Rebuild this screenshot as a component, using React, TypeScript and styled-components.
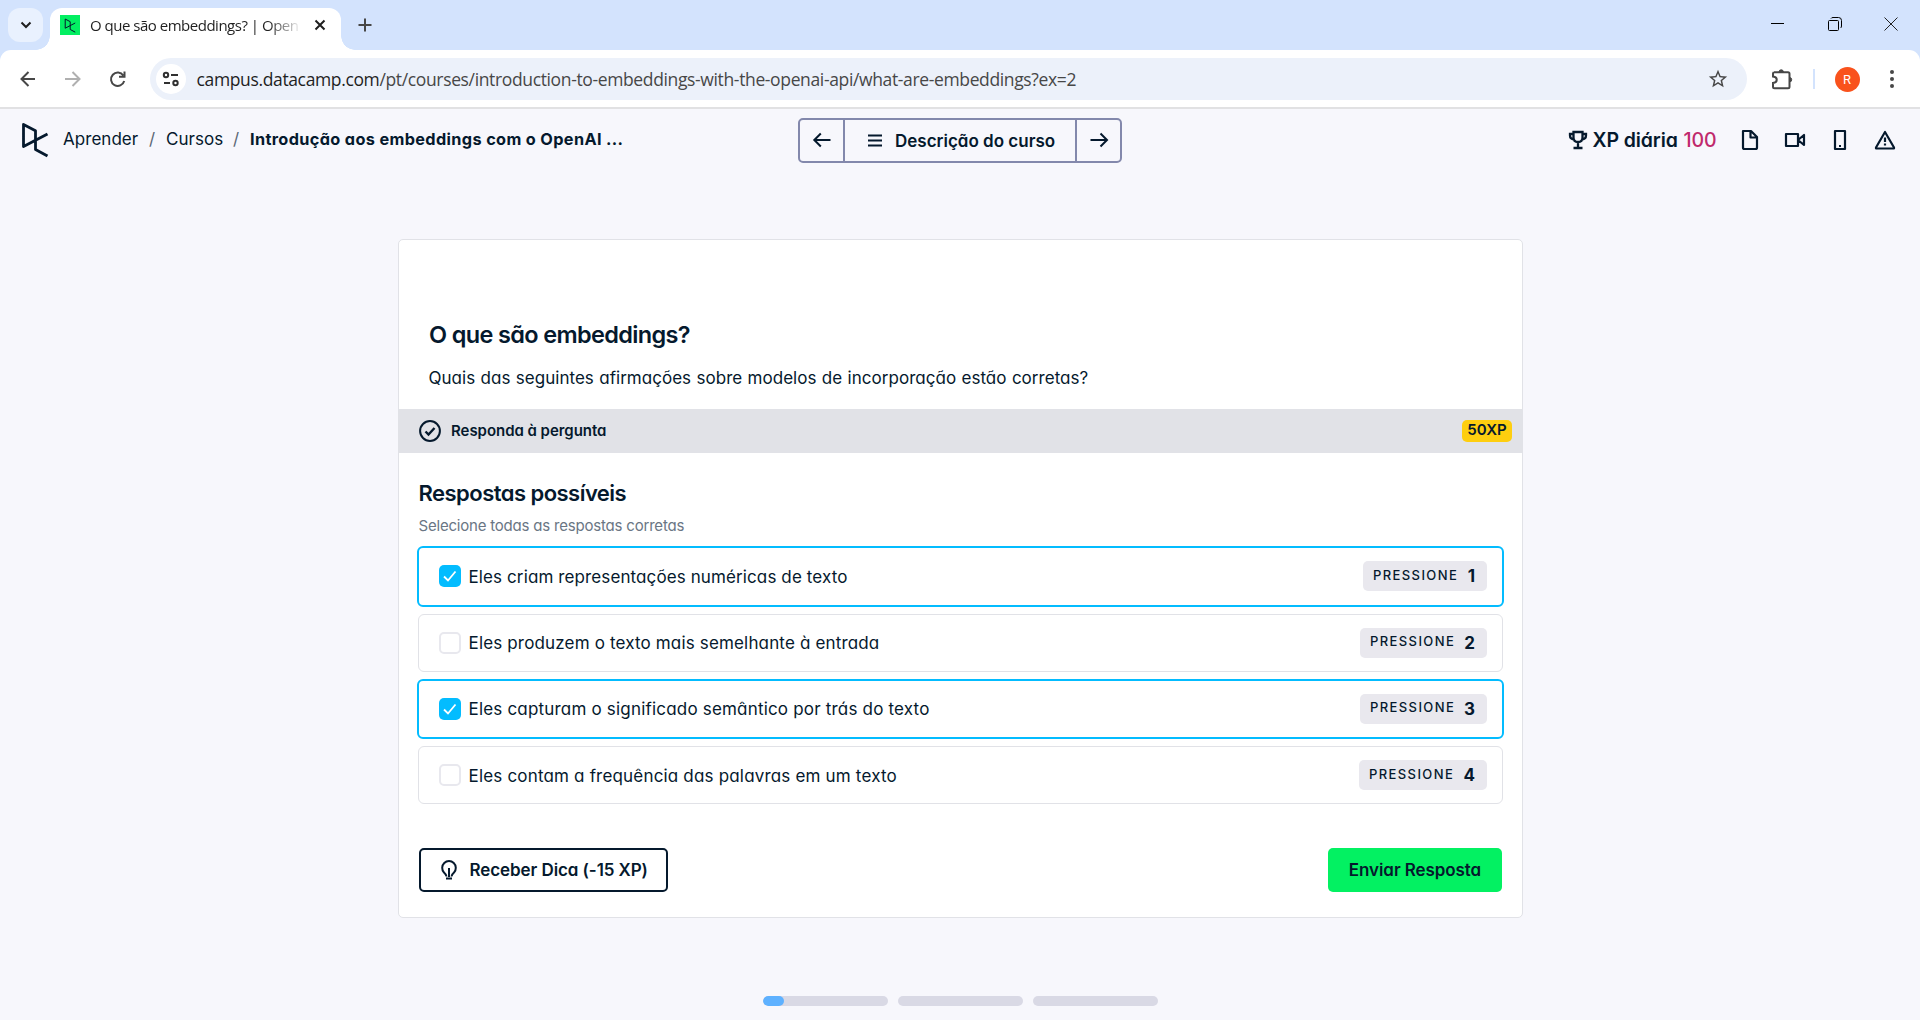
import React from 'react';
import styled, { createGlobalStyle } from 'styled-components';
import { MdStarOutline } from 'react-icons/md';

const navy = '#05192d';
const ui = `Inter, 'Liberation Sans', sans-serif`;
const system = `'Open Sans', 'Noto Sans', sans-serif`;

const GlobalStyle = createGlobalStyle`
  * { box-sizing: border-box; }
  html, body { margin: 0; padding: 0; background: #f7f7fc; overflow: hidden; }
  button { font: inherit; color: inherit; background: none; border: 0; padding: 0; }
  svg { display: block; flex: none; }
`;

const Screen = styled.div`
  width: 1920px;
  height: 1020px;
  display: flex;
  flex-direction: column;
  background: #f7f7fc;
  color: ${navy};
  font-family: ${ui};
  font-feature-settings: 'cv11' 1;
  white-space: nowrap;
`;

/* ---------- browser chrome ---------- */

const TabStrip = styled.div`
  height: 50px;
  display: flex;
  align-items: flex-start;
  background: #d3e3fd;
  padding: 8px 0 0 8px;
`;

const TabSearch = styled.button`
  width: 35px;
  height: 34px;
  border-radius: 12px;
  background: #e9f1fe;
  display: grid;
  place-items: center;
`;

const Tab = styled.div`
  position: relative;
  width: 291px;
  height: 42px;
  margin-left: 7px;
  padding: 0 15px 8px 10px;
  display: flex;
  align-items: center;
  background: #fff;
  border-radius: 12px 12px 0 0;

  &::before,
  &::after {
    content: '';
    position: absolute;
    bottom: 0;
    width: 14px;
    height: 14px;
  }
  &::before {
    left: -14px;
    background: radial-gradient(circle at 0 0, transparent 13.5px, #fff 14px);
  }
  &::after {
    right: -14px;
    background: radial-gradient(circle at 100% 0, transparent 13.5px, #fff 14px);
  }
`;

const Favicon = styled.span`
  width: 20px;
  height: 20px;
  background: #03ef62;
  display: grid;
  place-items: center;
`;

const TabTitle = styled.span`
  width: 213px;
  margin-left: 10px;
  margin-right: 11px;
  font: 15px/24px ${system};
  letter-spacing: -0.49px;
  color: #1f1f1f;
  mask-image: linear-gradient(90deg, #000 178px, transparent 212px);
`;

const NewTab = styled.button`
  margin: 10px 0 0 17px;
`;

const WindowControls = styled.div`
  display: flex;
  gap: 42.5px;
  margin: 9px 22px 0 auto;
`;

const Toolbar = styled.div`
  background: #d3e3fd;
  height: 59px;
`;

const ToolbarInner = styled.div`
  height: 59px;
  display: flex;
  align-items: center;
  padding: 1px 15px 0 16px;
  background: #fff;
  border-radius: 11px 11px 0 0;
  border-bottom: 2px solid #e1e1e3;
`;

const NavButtons = styled.div`
  display: flex;
  gap: 21px;
  width: 134px;
`;

const Omnibox = styled.div`
  width: 1597px;
  height: 42px;
  display: flex;
  align-items: center;
  padding: 0 18px 0 6px;
  border-radius: 21px;
  background: #ecf1fa;
`;

const SiteInfo = styled.span`
  width: 30px;
  height: 30px;
  border-radius: 50%;
  background: #fff;
  display: grid;
  place-items: center;
`;

const Url = styled.span`
  flex: 1;
  margin-left: 10.5px;
  font: 17.5px/26px ${system};
  letter-spacing: -0.36px;
  color: #474747;
`;

const Host = styled.span`
  color: #1f1f1f;
`;

const ToolbarEnd = styled.div`
  display: flex;
  align-items: center;
  margin-left: 23.5px;
`;

const ToolbarDivider = styled.span`
  width: 2px;
  height: 20px;
  margin: 0 20px;
  background: #d3e3fd;
`;

const Avatar = styled.span`
  width: 25px;
  height: 25px;
  margin-right: 20px;
  border-radius: 50%;
  background: #f9521c;
  color: #fff;
  font: 13px/26px Roboto, sans-serif;
  text-align: center;
`;

/* ---------- course header ---------- */

const Header = styled.header`
  height: 62px;
  display: grid;
  grid-template-columns: 798px 324px 1fr;
  align-items: center;
`;

const Breadcrumbs = styled.nav`
  display: flex;
  align-items: center;
  padding: 0 0 0 21px;
  font-size: 17px;
  line-height: 24px;
`;

const Crumb = styled.span<{ $w: number; $bold?: boolean; $first?: boolean }>`
  width: ${p => p.$w}px;
  margin-left: ${p => (p.$first ? 14 : 0)}px;
  padding-bottom: 2px;
  font-weight: ${p => (p.$bold ? 700 : 400)};
  font-size: ${p => (p.$bold ? 16.3 : 17)}px;
  letter-spacing: ${p => (p.$bold ? 0.35 : 0.04)}px;
`;

const Slash = styled.span`
  width: 7px;
  margin: 0 10px 0 9px;
  padding-bottom: 2px;
  color: #5b6775;
`;

const CourseNav = styled.div`
  height: 45px;
  display: grid;
  grid-template-columns: 43px 1fr 43px;
  margin-top: 1px;
  border: 2px solid #8388ac;
  border-radius: 5px;
`;

const CourseNavButton = styled.button<{ $main?: boolean }>`
  display: flex;
  align-items: center;
  justify-content: ${p => (p.$main ? 'flex-start' : 'center')};
  gap: 12px;
  padding: ${p => (p.$main ? '0 0 0 22px' : '0 0 2px 0')};
  border-inline: ${p => (p.$main ? '2px solid #8388ac' : '0')};
  font-weight: 600;
  font-size: 17px;
  letter-spacing: 0;
`;

const HeaderTools = styled.div`
  display: flex;
  align-items: center;
  justify-content: flex-end;
  gap: 21px;
  padding: 0 23px 0 0;
`;

const DailyXp = styled.div`
  width: 149px;
  display: flex;
  align-items: center;
  font-size: 19.5px;
  line-height: 26px;
  font-weight: 600;
  letter-spacing: -0.1px;
`;

const DailyLabel = styled.span`
  width: 91px;
  margin-left: 4.5px;
`;

const DailyValue = styled.span`
  color: #c0296c;
  font-weight: 500;
`;

/* ---------- exercise card ---------- */

const Card = styled.main`
  width: 1125px;
  height: 679px;
  margin: 68px 0 0 398px;
  border: 1px solid #e1e2e7;
  border-radius: 5px;
  background: #fff;
`;

const Intro = styled.section`
  height: 169px;
  padding: 78px 30px 0;
`;

const Title = styled.h1`
  margin: 0;
  font-size: 23.5px;
  line-height: 34px;
  font-weight: 600;
  letter-spacing: -0.65px;
`;

const Question = styled.p`
  margin: 13px 0 0 -0.5px;
  font-size: 17px;
  line-height: 27px;
  letter-spacing: 0.03px;
  word-spacing: 0.55px;
`;

const TaskBar = styled.div`
  height: 44px;
  display: flex;
  align-items: center;
  padding: 0 10px 0 20px;
  background: #e1e2e7;
`;

const TaskLabel = styled.span`
  flex: 1;
  margin-left: 10px;
  font-size: 15px;
  line-height: 22px;
  font-weight: 600;
  letter-spacing: -0.04px;
`;

const XpBadge = styled.span`
  width: 50px;
  height: 22px;
  border-radius: 5px;
  background: #fece0f;
  font-size: 15px;
  line-height: 20px;
  font-weight: 600;
  text-align: center;
`;

const Answers = styled.section`
  padding: 25px 18px 0;
`;

const AnswersTitle = styled.h2`
  margin: 0 0 0 1.5px;
  font-size: 22px;
  line-height: 30px;
  font-weight: 600;
  letter-spacing: -0.53px;
`;

const AnswersHint = styled.p`
  margin: 7px 0 9px 1.5px;
  height: 22px;
  font-size: 15px;
  line-height: 22px;
  letter-spacing: -0.2px;
  color: #6a7684;
`;

const AnswerList = styled.ul`
  margin: 0;
  padding: 0;
  list-style: none;
`;

const AnswerRow = styled.li<{ $checked: boolean }>`
  height: ${p => (p.$checked ? 60.5 : 58)}px;
  margin: ${p => (p.$checked ? '0 0 7px' : '0 1px 7px')};
  padding: 0 15px 0 20px;
  display: flex;
  align-items: center;
  border: ${p => (p.$checked ? '2px solid #03bcff' : '1px solid #e1e2e7')};
  border-radius: 6px;
`;

const Checkbox = styled.span<{ $checked: boolean }>`
  width: 22px;
  height: 22px;
  border-radius: 5px;
  border: ${p => (p.$checked ? '0' : '2px solid #e8e8ee')};
  background: ${p => (p.$checked ? '#03bcff' : '#fff')};
  display: grid;
  place-items: center;
`;

const AnswerText = styled.span<{ $track: number }>`
  flex: 1;
  margin-left: 7.5px;
  padding-top: 1px;
  font-size: 17px;
  line-height: 26px;
  letter-spacing: ${p => p.$track}px;
`;

const KeyHint = styled.span<{ $w: number }>`
  width: ${p => p.$w}px;
  height: 30px;
  display: flex;
  align-items: center;
  justify-content: space-between;
  padding: 0 12px 0 10px;
  border-radius: 5px;
  background: #e9e8ee;
`;

const KeyWord = styled.span`
  padding-bottom: 3px;
  font-size: 13px;
  line-height: 20px;
  font-weight: 500;
  letter-spacing: 1.4px;
`;

const KeyDigit = styled.span`
  font-size: 17px;
  line-height: 24px;
  font-weight: 700;
`;

const Actions = styled.footer`
  display: flex;
  justify-content: space-between;
  padding: 37px 20px 0;
`;

const ActionButton = styled.button<{ $primary?: boolean }>`
  width: ${p => (p.$primary ? 174 : 249)}px;
  height: 44px;
  display: flex;
  align-items: center;
  justify-content: ${p => (p.$primary ? 'center' : 'flex-start')};
  gap: 11px;
  padding-left: ${p => (p.$primary ? 0 : 17.5)}px;
  border: ${p => (p.$primary ? '0' : `2px solid ${navy}`)};
  border-radius: 5px;
  background: ${p => (p.$primary ? '#03f162' : '#fff')};
  font-size: 17px;
  font-weight: 600;
  letter-spacing: -0.08px;
`;

const Progress = styled.div`
  display: flex;
  gap: 10px;
  margin: 78px 0 0 763px;
`;

const ProgressStep = styled.div`
  width: 125px;
  height: 10px;
  border-radius: 5px;
  background: #d9d9e5;
  overflow: hidden;
`;

const ProgressFill = styled.div`
  width: 21px;
  height: 10px;
  border-radius: 5px;
  background: #5eb1ff;
`;

/* ---------- icons ---------- */

const Line = ({ size = 20, w = 2, color = navy, children }: { size?: number; w?: number; color?: string; children: React.ReactNode }) => (
  <svg width={size} height={size} viewBox={`0 0 ${size} ${size}`} fill="none" stroke={color} strokeWidth={w}>
    {children}
  </svg>
);

const DcMark = ({ width, height, stroke }: { width: number; height: number; stroke: number }) => (
  <svg width={width} height={height} viewBox="0 0 28 36" fill="none" stroke={navy} strokeWidth={stroke} strokeLinejoin="round">
    <path d="M26.500 12 2.500 24.500V2.500L14.500 8.800V27.500L26.500 34" />
  </svg>
);

const answers = [
  { text: 'Eles criam representações numéricas de texto', checked: true, hint: 124, track: 0.11 },
  { text: 'Eles produzem o texto mais semelhante à entrada', checked: false, hint: 127, track: 0.16 },
  { text: 'Eles capturam o significado semântico por trás do texto', checked: true, hint: 127, track: 0.19 },
  { text: 'Eles contam a frequência das palavras em um texto', checked: false, hint: 128, track: 0.18 },
];

export default function App() {
  return (
    <Screen>
      <GlobalStyle />
      <TabStrip>
        <TabSearch>
          <Line size={12} color="#1f1f1f"><path d="M1.500 3.500 6 8l4.500-4.500" /></Line>
        </TabSearch>
        <Tab>
          <Favicon><DcMark width={12} height={15} stroke={2.4} /></Favicon>
          <TabTitle>O que são embeddings? | Open</TabTitle>
          <Line size={12} color="#1f1f1f"><path d="m1.500 1.500 9 9m0-9-9 9" /></Line>
        </Tab>
        <NewTab><Line size={14} color="#474747"><path d="M7 .5v13M.5 7h13" /></Line></NewTab>
        <WindowControls>
          <Line size={14} w={1} color="#000"><path d="M0 6.500h13" /></Line>
          <Line size={14} w={1} color="#000">
            <rect x=".5" y="3.500" width="10" height="10" rx="1" />
            <path d="M3 1.500Q3.500.5 5 .5h5.500q3 0 3 3V9q0 1.500-1 2" />
          </Line>
          <Line size={14} w={1} color="#222"><path d="m.5.500 13 13m0-13-13 13" /></Line>
        </WindowControls>
      </TabStrip>
      <Toolbar>
        <ToolbarInner>
          <NavButtons>
            <Line size={24} color="#474747"><path d="M19 12H6M12.500 5 5.500 12l7 7" /></Line>
            <Line size={24} color="#b0b0b0"><path d="M4 12h14M11.500 5l7 7-7 7" /></Line>
            <Line size={24} color="#474747"><path d="M17.300 8.500A6.700 6.700 0 1 0 18.200 14M18.500 4.500V9.800H13" /></Line>
          </NavButtons>
          <Omnibox>
            <SiteInfo>
              <Line size={18} color="#303030">
                <circle cx="4" cy="5" r="2.200" /><path d="M9 5h7M2 13h6" /><circle cx="13.500" cy="13" r="2.200" />
              </Line>
            </SiteInfo>
            <Url><Host>campus.datacamp.com</Host>/pt/courses/introduction-to-embeddings-with-the-openai-api/what-are-embeddings?ex=2</Url>
            <MdStarOutline size={22} color="#474747" />
          </Omnibox>
          <ToolbarEnd>
            <Line size={22} color="#474747">
              <path d="M3 4.200h4.500M12 4.200h5q1.500 0 1.500 1.500v13q0 1.500-1.500 1.500H3.500q-1.500 0-1.500-1.500V15c5-.5 5-6 0-6.500V5.500q0-1.300 1.500-1.300H17" />
              <path d="M8 4a2.200 2.200 0 0 1 4.400 0ZM18.500 9.500a2.200 2.200 0 0 1 0 4.400Z" fill="#474747" strokeWidth="1" />
            </Line>
            <ToolbarDivider />
            <Avatar>R</Avatar>
            <svg width="24" height="20" viewBox="0 0 24 20" fill="#474747">
              <circle cx="12" cy="3" r="2" /><circle cx="12" cy="10" r="2" /><circle cx="12" cy="17" r="2" />
            </svg>
          </ToolbarEnd>
        </ToolbarInner>
      </Toolbar>

      <Header>
        <Breadcrumbs>
          <DcMark width={28} height={36} stroke={2.8} />
          <Crumb $w={77} $first>Aprender</Crumb>
          <Slash>/</Slash>
          <Crumb $w={58}>Cursos</Crumb>
          <Slash>/</Slash>
          <Crumb $w={374} $bold>Introdução aos embeddings com o OpenAI ...</Crumb>
        </Breadcrumbs>
        <CourseNav>
          <CourseNavButton aria-label="Anterior">
            <Line><path d="M18.500 10H3M8.800 3.500 2.300 10l6.500 6.500" /></Line>
          </CourseNavButton>
          <CourseNavButton $main>
            <Line size={16} w={2.2}><path d="M1 2.500h14M1 7.500h14M1 12.500h14" /></Line>
            Descrição do curso
          </CourseNavButton>
          <CourseNavButton aria-label="Próximo">
            <Line><path d="M1.500 10h16M11.500 3.500l6.500 6.500-6.500 6.500" /></Line>
          </CourseNavButton>
        </CourseNav>
        <HeaderTools>
          <DailyXp>
            <Line size={20} w={2.3}>
              <path d="M5.500 2h9v5.500q0 4.500-4.500 4.500T5.500 7.500ZM10 12v6M5.500 18h9M5.500 4H2v1.500Q2 9 6 9.500M14.500 4H18v1.500Q18 9 14 9.500" />
            </Line>
            <DailyLabel>XP diária</DailyLabel>
            <DailyValue>100</DailyValue>
          </DailyXp>
          <Line size={24} w={2.2}><path d="M5 3h8l6 6v10.500q0 1.500-1.500 1.500h-11Q5 21 5 19.500ZM12.500 3v6.500H19" strokeLinejoin="round" /></Line>
          <Line size={24} w={2.2}><path d="M3 6h12v12H3ZM15 12l6-5v10Z" strokeLinejoin="round" /></Line>
          <Line size={24} w={2.2}><path d="M7 3h10v18H7Z" strokeLinejoin="round" /><path d="M11 18h2" /></Line>
          <Line size={24} w={2.2}><path d="M12 4 3 19.500q-.3 1 .7 1h16.600q1 0 .7-1Z" strokeLinejoin="round" /><path d="M12 9.500v4.500M12 15.500v2" /></Line>
        </HeaderTools>
      </Header>

      <Card>
        <Intro>
          <Title>O que são embeddings?</Title>
          <Question>Quais das seguintes afirmações sobre modelos de incorporação estão corretas?</Question>
        </Intro>
        <TaskBar>
          <Line size={22}><circle cx="11" cy="11" r="9.900" /><path d="m6.500 11.500 3 3 6-6.500" strokeWidth="2.400" /></Line>
          <TaskLabel>Responda à pergunta</TaskLabel>
          <XpBadge>50XP</XpBadge>
        </TaskBar>
        <Answers>
          <AnswersTitle>Respostas possíveis</AnswersTitle>
          <AnswersHint>Selecione todas as respostas corretas</AnswersHint>
          <AnswerList>
            {answers.map((a, i) => (
              <AnswerRow key={a.text} $checked={a.checked}>
                <Checkbox $checked={a.checked}>
                  {a.checked && <Line size={16} w={1.8} color="#fff"><path d="m2 8.500 4 4 7.500-9" /></Line>}
                </Checkbox>
                <AnswerText $track={a.track}>{a.text}</AnswerText>
                <KeyHint $w={a.hint}>
                  <KeyWord>PRESSIONE</KeyWord>
                  <KeyDigit>{i + 1}</KeyDigit>
                </KeyHint>
              </AnswerRow>
            ))}
          </AnswerList>
        </Answers>
        <Actions>
          <ActionButton>
            <Line size={20}>
              <path d="M7.500 16.500Q7.300 14.500 5 12.500A6.800 6.800 0 1 1 15 12.500Q12.700 14.500 12.500 16.500M10 8v9M7 18.500h6" />
            </Line>
            Receber Dica (-15 XP)
          </ActionButton>
          <ActionButton $primary>Enviar Resposta</ActionButton>
        </Actions>
      </Card>

      <Progress>
        <ProgressStep><ProgressFill /></ProgressStep>
        <ProgressStep />
        <ProgressStep />
      </Progress>
    </Screen>
  );
}
